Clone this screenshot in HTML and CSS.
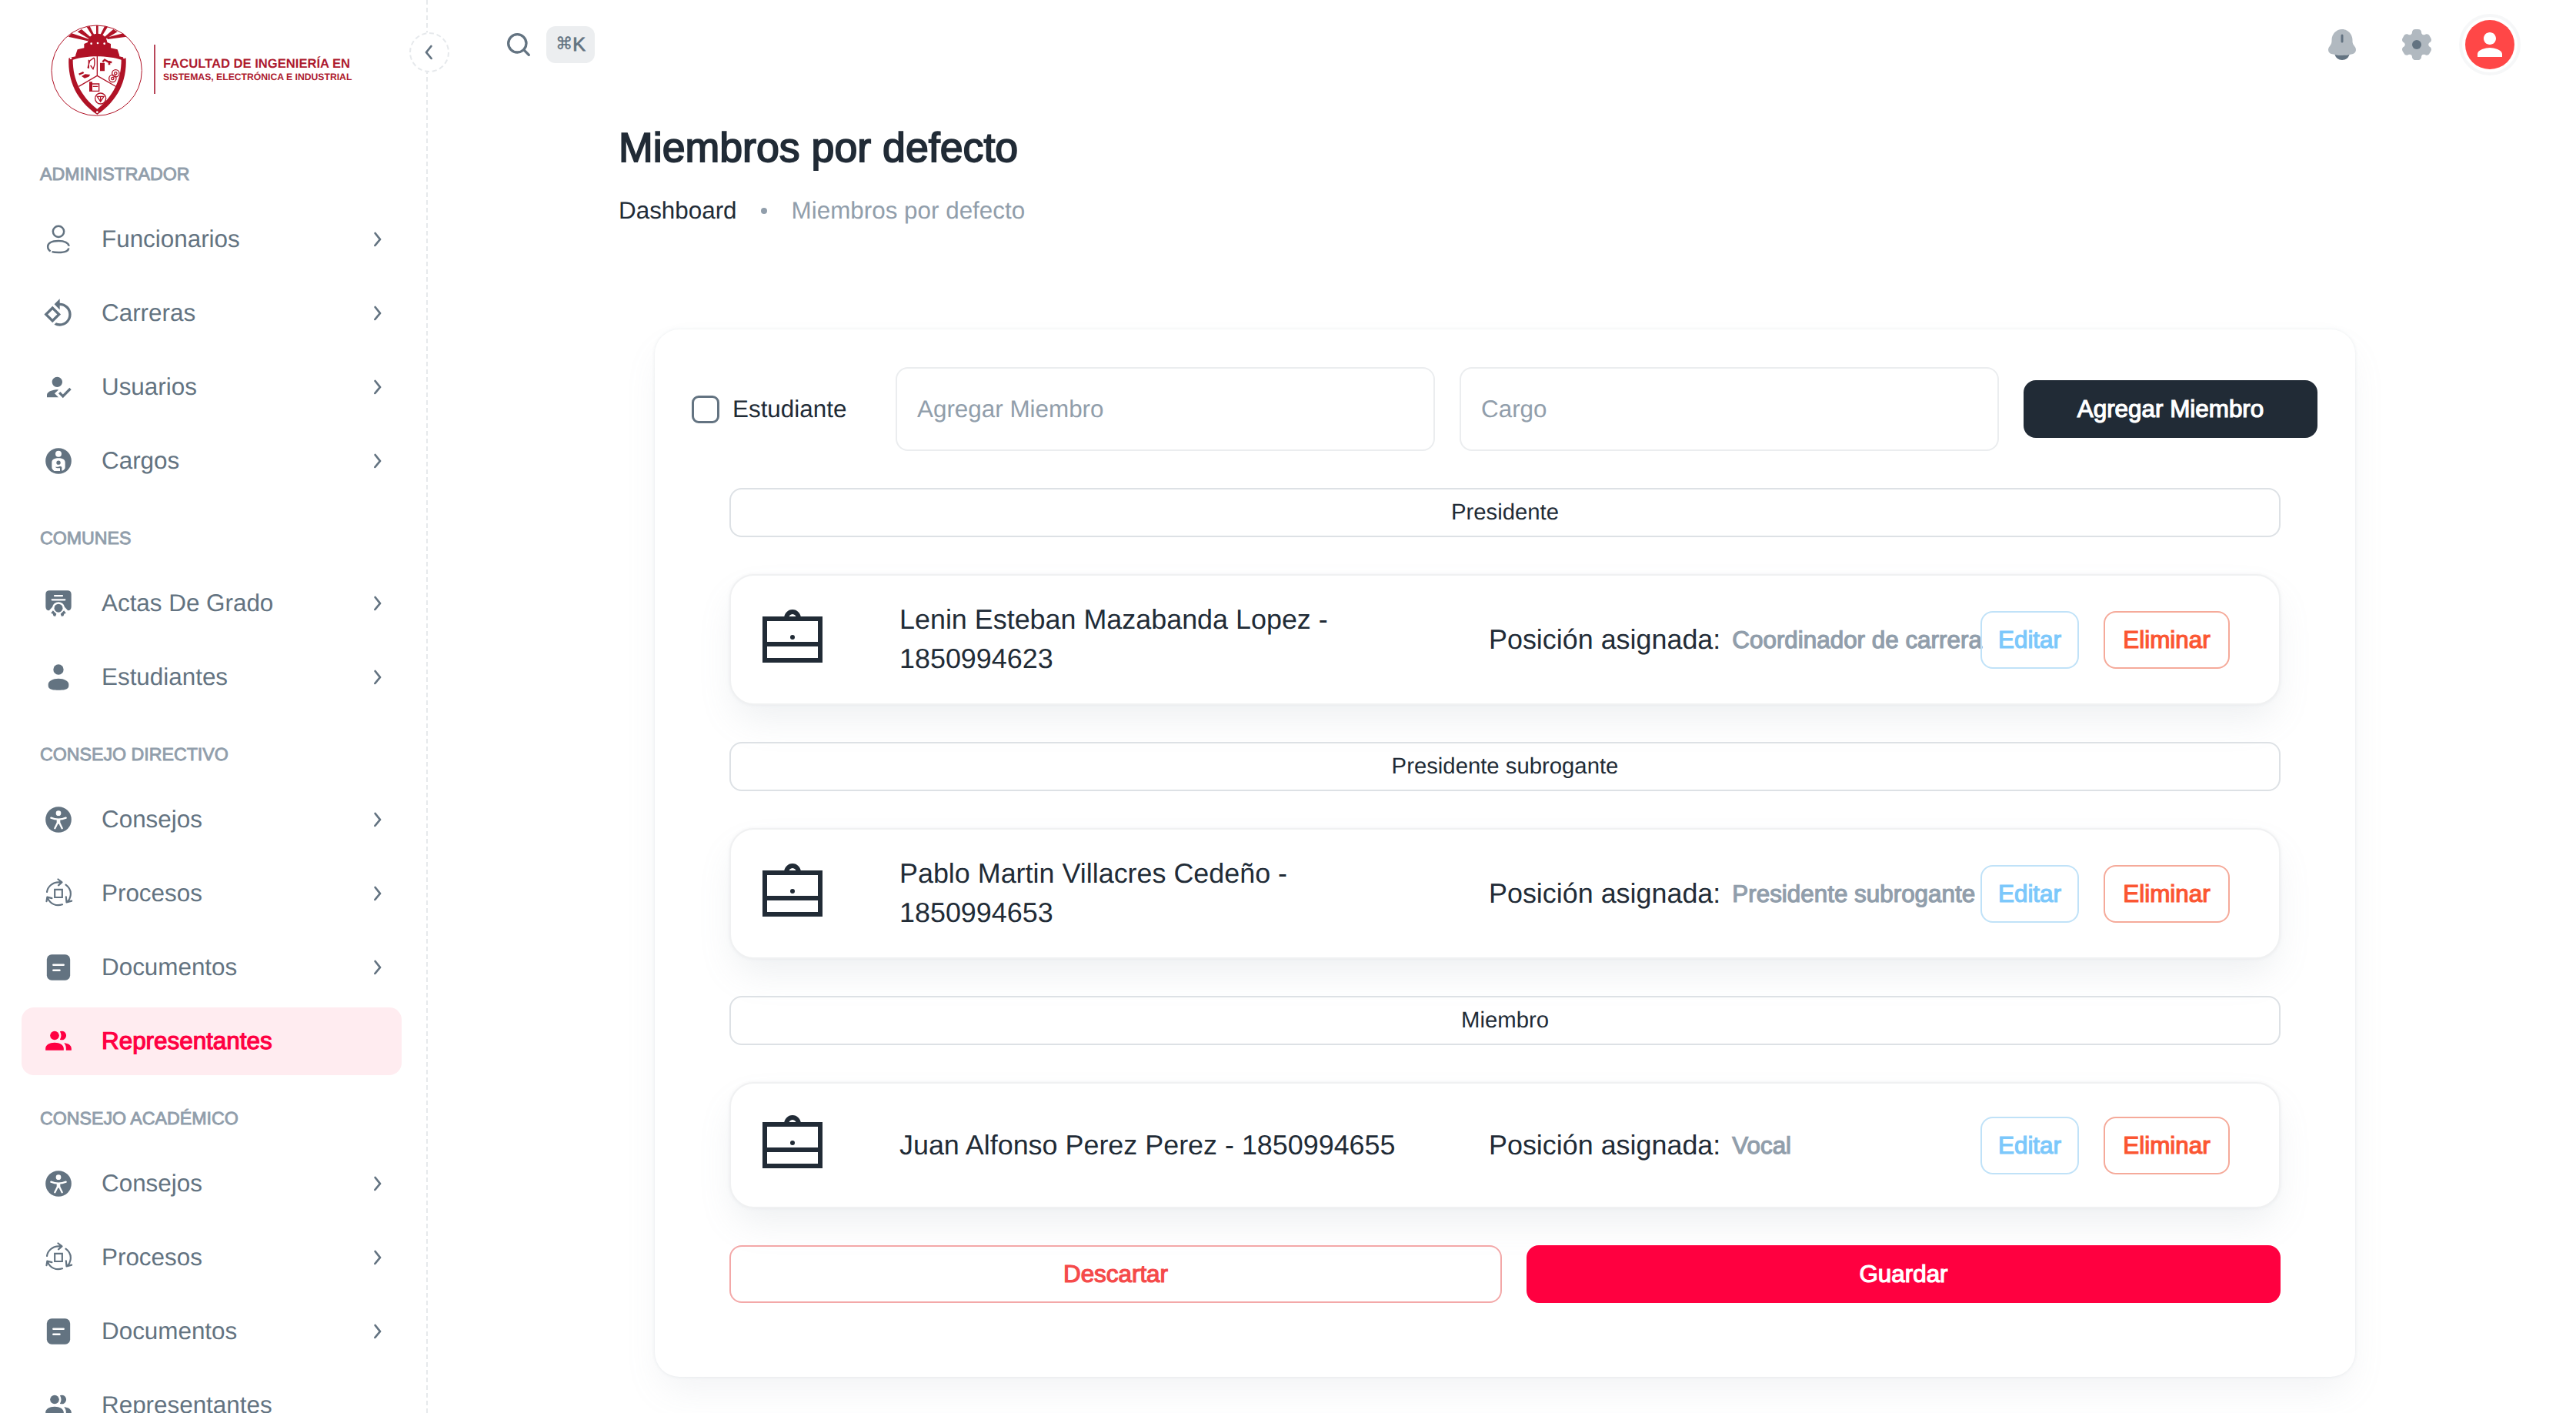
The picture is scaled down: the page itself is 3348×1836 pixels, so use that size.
FILE: index.html
```html
<!DOCTYPE html>
<html lang="es">
<head>
<meta charset="utf-8">
<title>Miembros por defecto</title>
<link rel="stylesheet" href="styles.css">
</head>
<body>
<svg class="sprite" aria-hidden="true">
  <symbol id="i-chevron" viewBox="0 0 24 24"><path d="M10 19a1 1 0 0 1-.64-.23 1 1 0 0 1-.13-1.41L13.71 12 9.39 6.63a1 1 0 0 1 .15-1.41 1 1 0 0 1 1.46.15l4.83 6a1 1 0 0 1 0 1.27l-5 6A1 1 0 0 1 10 19z"/></symbol>
  <symbol id="i-user-line" viewBox="0 0 24 24"><g fill="none" stroke="currentColor" stroke-width="1.5"><circle cx="12" cy="5.9" r="4.3"/><path d="M5.8 21.2C4.300 20.400 3.700 19.100 3.700 17.500c0-2.500 2.800-4.300 8.300-4.300 4.600 0 7.600 1.600 8.300 4M20 18.900c-.2 1-.7 1.800-1.800 2.300-1.500.7-3.700 1-6.200 1-2 0-3.700-.1-5.100-.5"/></g></symbol>
  <symbol id="i-rotate" viewBox="0 0 24 24"><path d="M7.34 6.41L.86 12.9l6.49 6.48 6.49-6.48-6.5-6.49zM3.69 12.9l3.66-3.66L11 12.9l-3.66 3.66-3.65-3.66zm15.67-6.26C17.61 4.88 15.3 4 13 4V.76L8.76 5 13 9.24V6c1.79 0 3.58.68 4.95 2.05 2.73 2.73 2.73 7.17 0 9.9C16.58 19.32 14.79 20 13 20c-.97 0-1.94-.21-2.84-.61l-1.49 1.49C10.02 21.62 11.51 22 13 22c2.300 0 4.610-.88 6.360-2.640 3.520-3.510 3.520-9.210 0-12.720z"/></symbol>
  <symbol id="i-usercheck" viewBox="0 0 24 24"><path d="M9 17l3-2.940c-.39-.04-.68-.06-1-.06-2.670 0-8 1.340-8 4v2h9l-3-3zm2-5c2.210 0 4-1.790 4-4s-1.790-4-4-4-4 1.790-4 4 1.790 4 4 4zm4.470 8.500L12 17l1.400-1.410 2.070 2.080 5.130-5.170 1.400 1.410z"/></symbol>
  <symbol id="i-guardian" viewBox="0 0 24 24"><circle cx="12" cy="12" r="10.100"/><circle cx="12" cy="6.500" r="2.400" fill="#fff"/><path fill="#fff" d="M12 9.800c2.800 0 5.200 1 5.200 3.400V17c0 1.300-1 2-1.900 2.500h-.7v-2.300c0-.7-.5-1-1.100-1-1.300 0-2.300.8-4.100.3.600 1 2.300 1.300 3.800 1v2.300H8.700C7.800 19 6.800 18.300 6.800 17v-3.800c0-2.400 2.400-3.400 5.200-3.400z"/><circle cx="12" cy="13.300" r="1.600"/></symbol>
  <symbol id="i-diploma" viewBox="0 0 24 24"><path d="M5 2h14c2 0 3 1 3 3v9.500c0 1.800-.9 3-2.700 3.100l-2.500-2.700A4.900 4.900 0 0 0 12 10.900a4.900 4.900 0 0 0-4.800 4l-2.500 2.700C2.900 17.500 2 16.300 2 14.500V5c0-2 1-3 3-3z"/><path fill="none" stroke="#fff" stroke-width="1.300" stroke-linecap="round" d="M9 6.100h6M7 9.200h10"/><circle cx="12" cy="15.700" r="3.300"/><path d="M7.700 17.500l2.700 2.800-.8 1.900-1.500-.5-.6-1.600-1.400-.4zM16.300 17.500l-2.700 2.800.8 1.900 1.500-.5.6-1.600 1.400-.4z"/></symbol>
  <symbol id="i-user" viewBox="0 0 24 24"><circle cx="12" cy="6" r="4"/><path d="M20 17.500c0 2.485 0 4.500-8 4.500s-8-2.015-8-4.500S7.582 13 12 13s8 2.015 8 4.500"/></symbol>
  <symbol id="i-access" viewBox="0 0 24 24"><circle cx="12" cy="12" r="10.100"/><circle cx="12" cy="7" r="2" fill="#fff"/><path fill="none" stroke="#fff" stroke-width="1.400" stroke-linecap="round" stroke-linejoin="round" d="M6.200 10.600C8 11.400 10 11.800 12 11.800s4-.4 5.800-1.200M11.400 12v2.300L9.200 18.700M12.600 12v2.300l2.200 4.400"/><path fill="#fff" d="M10.700 11.500h2.600v2.800L12 15.600l-1.300-1.300z"/></symbol>
  <symbol id="i-process" viewBox="0 0 24 24"><g fill="none" stroke="currentColor" stroke-width="1.300" stroke-linecap="round" stroke-linejoin="round"><path stroke-linejoin="miter" d="M9.100 8.900h5.800v6.100H9.100z"/><path d="M3 10.800C3.600 6.500 7.500 3.200 12 3.200h2.600M11.700.9l3 2.300-2.700 2.400M17.700 5.200c2.700 2 4.300 5.400 3.600 8.800-.3 1.700-1 3.200-2.300 4.500M17.900 14.600l.4 4.200 4-1M15 20.600c-3.400 1-7 .3-9.400-2-.9-.9-1.600-1.900-2.100-3M2.700 18.100l.5-3.300 3.600.9"/></g></symbol>
  <symbol id="i-doc" viewBox="0 0 24 24"><rect x="2.900" y="2" width="18.200" height="20" rx="3.800"/><path stroke="#fff" stroke-width="1.500" stroke-linecap="round" d="M8 10h8M8 14.200h4.900"/></symbol>
  <symbol id="i-group" viewBox="0 0 24 24"><circle cx="9" cy="7.500" r="3.500"/><path d="M13.100 4.300a3.500 3.500 0 1 1 0 6.400c1.300-1.900 1.300-4.500 0-6.400zM1.900 19v-1.300C1.900 14.700 5 13 9 13s7.100 1.700 7.100 4.700V19zM16.300 13.300c3.300.2 5.800 1.700 5.800 4.400V19h-4.200v-1.300c0-1.900-.5-3.300-1.600-4.400z"/></symbol>
  <symbol id="i-case" viewBox="0 0 96 96"><g fill="none" stroke="currentColor" stroke-width="6"><path d="M12 21h72v54H12zM12 54h72"/><path d="M40 20.500a8 8.500 0 0 1 16 0"/></g><circle cx="48" cy="45" r="3"/></symbol>
</svg>

<aside class="sidebar">
  <div class="logo">
    <svg class="crest" viewBox="0 0 390 390">
      <g fill="#b01226">
        <circle cx="191" cy="194" r="176" fill="none" stroke="#b01226" stroke-width="3"/>
        <path d="M189 18h8v36h-8zM152 24l12-3 17 34-7 4zM222 21l12 3-22 35-7-4zM116 43l16-10 37 32-6 6zM256 33l16 10-47 28-6-6zM80 62l14-13 66 22-4 8zM294 49l14 13-74 10-4-7z"/>
        <path d="M108 136l8-24 26-6v-16l14-6c2-22 18-34 38-34s36 12 38 34l14 6v16l26 6 8 24-4 6c-40-14-124-14-164 0z"/>
        <path fill-rule="evenodd" d="M82 146c6-4 18-4 28-8 50-12 120-12 168 0 10 4 20 4 27 8 4 90-32 164-112 220C113 310 78 236 82 146zm16 6c0 78 32 142 95 192 63-50 94-114 94-192-50-18-139-18-189 0z"/>
      </g>
      <g fill="#fff"><circle cx="170" cy="89" r="4"/><circle cx="195" cy="87" r="4"/><circle cx="221" cy="89" r="4"/><circle cx="90" cy="146" r="4"/><circle cx="298" cy="144" r="4"/><circle cx="193" cy="356" r="4"/></g>
      <g fill="none" stroke="#b01226" stroke-width="4">
        <path d="M193 138v76l-72 42M193 214l76 44"/>
        <path d="M181 144l-17 12-8 28M181 144c4 18 2 32-4 44l-10-14M160 152v34"/>
        <circle cx="265" cy="205" r="14"/><circle cx="265" cy="205" r="5"/><circle cx="253" cy="225" r="14"/><circle cx="253" cy="225" r="5"/>
        <circle cx="206" cy="303" r="21"/><path d="M193 295h26l-13 20zM206 295v22"/>
        <path d="M174 246h26v28h-30"/><path d="M176 256h20"/>
        <path stroke-width="7" d="M214 160l8-8 14 8 14 2"/>
      </g>
      <g fill="#b01226"><path d="M204 164h18v32h-18zM236 156h8v16h-8zM162 238h12v38h-12zM120 206l18-8 4 6-18 8zM132 216l14-8 20 2-6 8-16 6z"/></g>
    </svg>
    <div class="logo-text">
      <span class="logo-a">FACULTAD DE INGENIERÍA EN</span>
      <span class="logo-b">SISTEMAS, ELECTRÓNICA E INDUSTRIAL</span>
    </div>
  </div>
  <nav class="nav">
    <h6 class="nav-title">ADMINISTRADOR</h6>
    <a class="nav-item"><svg class="ico"><use href="#i-user-line"/></svg><span>Funcionarios</span><svg class="chev"><use href="#i-chevron"/></svg></a>
    <a class="nav-item"><svg class="ico"><use href="#i-rotate"/></svg><span>Carreras</span><svg class="chev"><use href="#i-chevron"/></svg></a>
    <a class="nav-item"><svg class="ico"><use href="#i-usercheck"/></svg><span>Usuarios</span><svg class="chev"><use href="#i-chevron"/></svg></a>
    <a class="nav-item"><svg class="ico"><use href="#i-guardian"/></svg><span>Cargos</span><svg class="chev"><use href="#i-chevron"/></svg></a>
    <h6 class="nav-title">COMUNES</h6>
    <a class="nav-item"><svg class="ico"><use href="#i-diploma"/></svg><span>Actas De Grado</span><svg class="chev"><use href="#i-chevron"/></svg></a>
    <a class="nav-item"><svg class="ico"><use href="#i-user"/></svg><span>Estudiantes</span><svg class="chev"><use href="#i-chevron"/></svg></a>
    <h6 class="nav-title">CONSEJO DIRECTIVO</h6>
    <a class="nav-item"><svg class="ico"><use href="#i-access"/></svg><span>Consejos</span><svg class="chev"><use href="#i-chevron"/></svg></a>
    <a class="nav-item"><svg class="ico"><use href="#i-process"/></svg><span>Procesos</span><svg class="chev"><use href="#i-chevron"/></svg></a>
    <a class="nav-item"><svg class="ico"><use href="#i-doc"/></svg><span>Documentos</span><svg class="chev"><use href="#i-chevron"/></svg></a>
    <a class="nav-item active"><svg class="ico"><use href="#i-group"/></svg><span>Representantes</span></a>
    <h6 class="nav-title">CONSEJO ACADÉMICO</h6>
    <a class="nav-item"><svg class="ico"><use href="#i-access"/></svg><span>Consejos</span><svg class="chev"><use href="#i-chevron"/></svg></a>
    <a class="nav-item"><svg class="ico"><use href="#i-process"/></svg><span>Procesos</span><svg class="chev"><use href="#i-chevron"/></svg></a>
    <a class="nav-item"><svg class="ico"><use href="#i-doc"/></svg><span>Documentos</span><svg class="chev"><use href="#i-chevron"/></svg></a>
    <a class="nav-item"><svg class="ico"><use href="#i-group"/></svg><span>Representantes</span></a>
  </nav>
</aside>
<button class="toggle" aria-label="Contraer"><svg class="chev flip"><use href="#i-chevron"/></svg></button>

<div class="page">
  <header class="topbar">
    <svg class="search" viewBox="0 0 24 24"><path d="M20.710 19.290l-3.400-3.390A7.920 7.920 0 0 0 19 11a8 8 0 1 0-8 8 7.920 7.920 0 0 0 4.900-1.690l3.390 3.400a1 1 0 0 0 1.420 0 1 1 0 0 0 0-1.420zM5 11a6 6 0 1 1 6 6 6 6 0 0 1-6-6z"/></svg>
    <span class="kbd"><span class="cmd">⌘</span>K</span>
    <div class="actions">
      <svg class="tool" viewBox="0 0 24 24"><path opacity=".5" d="M18.749 9v.704c0 .845.24 1.671.692 2.374l1.108 1.723c1.011 1.574.239 3.713-1.520 4.210a25.794 25.794 0 0 1-14.060 0c-1.759-.497-2.531-2.636-1.520-4.210l1.108-1.723a4.393 4.393 0 0 0 .693-2.374V9c0-3.866 3.022-7 6.749-7s6.750 3.134 6.750 7"/><path d="M12.750 6a.75.75 0 0 0-1.500 0v4a.75.75 0 0 0 1.500 0zM7.243 18.545a5.002 5.002 0 0 0 9.513 0c-3.145.59-6.367.59-9.513 0"/></svg>
      <svg class="tool" viewBox="0 0 24 24"><path opacity=".5" d="M14.279 2.152C13.909 2 13.439 2 12.500 2s-1.408 0-1.779.152a2.008 2.008 0 0 0-1.090 1.083c-.094.223-.13.484-.145.863a1.615 1.615 0 0 1-.796 1.353 1.640 1.640 0 0 1-1.579.008c-.338-.178-.583-.276-.825-.308a2.026 2.026 0 0 0-1.490.396c-.318.242-.553.646-1.022 1.453-.47.807-.704 1.210-.757 1.605-.07.526.074 1.058.4 1.479.148.192.357.353.68.555.477.297.783.803.783 1.361 0 .558-.306 1.064-.782 1.360-.324.203-.533.364-.682.556a1.990 1.990 0 0 0-.399 1.479c.053.394.287.798.757 1.605.47.807.704 1.210 1.022 1.453.424.323.96.465 1.490.396.242-.032.487-.13.825-.308a1.640 1.640 0 0 1 1.580.008c.486.28.774.795.795 1.353.015.38.051.64.145.863.204.49.596.88 1.090 1.083.37.152.84.152 1.779.152s1.409 0 1.779-.152a2.008 2.008 0 0 0 1.090-1.083c.094-.223.13-.483.145-.863.02-.558.309-1.074.796-1.353a1.640 1.640 0 0 1 1.579-.008c.338.178.583.276.825.308.53.07 1.066-.073 1.490-.396.318-.242.553-.646 1.022-1.453.47-.807.704-1.210.757-1.605a1.990 1.990 0 0 0-.4-1.479c-.148-.192-.357-.353-.68-.555-.477-.297-.783-.803-.783-1.361 0-.558.306-1.064.782-1.360.324-.203.533-.364.682-.556a1.990 1.990 0 0 0 .399-1.479c-.053-.394-.287-.798-.757-1.605-.47-.807-.704-1.210-1.022-1.453a2.026 2.026 0 0 0-1.490-.396c-.242.032-.487.13-.825.308a1.640 1.640 0 0 1-1.580-.008 1.615 1.615 0 0 1-.795-1.353c-.015-.38-.051-.64-.145-.863a2.007 2.007 0 0 0-1.090-1.083"/><circle cx="12.500" cy="12" r="3"/></svg>
      <span class="avatar"><span class="face"><svg viewBox="0 0 24 24"><path d="M12 12c2.210 0 4-1.790 4-4s-1.790-4-4-4-4 1.790-4 4 1.790 4 4 4zm0 2c-2.670 0-8 1.340-8 4v2h16v-2c0-2.660-5.330-4-8-4z"/></svg></span></span>
    </div>
  </header>

  <main class="content">
    <h1 class="title">Miembros por defecto</h1>
    <div class="crumbs"><span>Dashboard</span><i class="dot"></i><span class="muted">Miembros por defecto</span></div>

    <section class="card">
      <div class="form">
        <label class="check"><i class="box"></i>Estudiante</label>
        <div class="field">Agregar Miembro</div>
        <div class="field">Cargo</div>
        <button class="btn dark">Agregar Miembro</button>
      </div>
      <div class="list">
        <div class="role">Presidente</div>
        <article class="member">
          <svg class="case"><use href="#i-case"/></svg>
          <p class="name">Lenin Esteban Mazabanda Lopez - 1850994623</p>
          <p class="pos"><span>Posición asignada:</span><b>Coordinador de carrera</b></p>
          <div class="ops"><button class="btn edit">Editar</button><button class="btn del">Eliminar</button></div>
        </article>
        <div class="role">Presidente subrogante</div>
        <article class="member">
          <svg class="case"><use href="#i-case"/></svg>
          <p class="name">Pablo Martin Villacres Cedeño - 1850994653</p>
          <p class="pos"><span>Posición asignada:</span><b>Presidente subrogante</b></p>
          <div class="ops"><button class="btn edit">Editar</button><button class="btn del">Eliminar</button></div>
        </article>
        <div class="role">Miembro</div>
        <article class="member">
          <svg class="case"><use href="#i-case"/></svg>
          <p class="name">Juan Alfonso Perez Perez - 1850994655</p>
          <p class="pos"><span>Posición asignada:</span><b>Vocal</b></p>
          <div class="ops"><button class="btn edit">Editar</button><button class="btn del">Eliminar</button></div>
        </article>
        <div class="footer"><button class="btn discard">Descartar</button><button class="btn save">Guardar</button></div>
      </div>
    </section>
  </main>
</div>
</body>
</html>
```
FILE: styles.css
```css
* { box-sizing: border-box; }

body {
  margin: 0;
  height: 1836px;
  overflow: hidden;
  display: flex;
  position: relative;
  background: #fff;
  color: #212b36;
  font-family: "Liberation Sans", Arial, sans-serif;
  font-size: 31.4px;
  text-rendering: geometricPrecision;
}

h1, h6, p { margin: 0; font-weight: 400; }
svg { display: block; fill: currentColor; flex: none; }
.sprite { position: absolute; width: 0; height: 0; }
button { font: inherit; background: none; border: 0; padding: 0; margin: 0; color: inherit; }

/* Sidebar */
.sidebar {
  width: 556px;
  height: 1836px;
  flex: none;
  overflow: hidden;
  border-right: 2px dashed #e6e9ec;
}
.logo { height: 170px; padding: 27px 0 0 62px; display: flex; align-items: flex-start; }
.crest { width: 130px; height: 130px; }
.logo-text {
  margin: 31px 0 0 8px;
  height: 64px;
  padding: 15px 0 0 10px;
  border-left: 2px solid #b8475a;
  display: flex;
  flex-direction: column;
  font-weight: 700;
  color: #ad1a2e;
  white-space: nowrap;
}
.logo-a { font-size: 16.6px; line-height: 20px; }
.logo-b { font-size: 12.2px; line-height: 15px; }

.nav { padding-left: 28px; }
.nav-title {
  height: 97px;
  padding: 44px 0 0 24px;
  font-size: 23.2px;
  line-height: 24px;
  color: #919eab;
  -webkit-text-stroke: .9px currentColor;
}
.nav-item {
  width: 494px;
  height: 88px;
  margin-bottom: 8px;
  padding: 0 16px 0 28px;
  border-radius: 16px;
  display: flex;
  align-items: center;
  color: #637381;
}
.nav-item:has(+ .nav-title) { margin-bottom: 0; }
.nav-item span { flex: 1; margin-left: 36px; line-height: 44px; }
.ico { width: 40px; height: 40px; }
.chev { width: 32px; height: 32px; }
.nav-item.active { background: #ffecf0; color: #ff0042; }
.nav-item.active span { -webkit-text-stroke: 1.2px currentColor; }
.flip { transform: scaleX(-1); }
.toggle {
  position: absolute;
  left: 532px;
  top: 42px;
  width: 52px;
  height: 52px;
  border: 2px dashed #e6e9ec;
  border-radius: 50%;
  background: #fff;
  color: #637381;
  display: grid;
  place-items: center;
}

/* Top bar */
.page { flex: 1; min-width: 0; }
.topbar {
  height: 116px;
  padding: 0 72px 0 98px;
  display: flex;
  align-items: center;
  color: #637381;
}
.search { width: 40px; height: 40px; }
.kbd {
  margin-left: 16px;
  width: 63px;
  height: 48px;
  border-radius: 12px;
  background: #eceef0;
  display: flex;
  align-items: center;
  justify-content: center;
  font-size: 25px;
  line-height: 48px;
  -webkit-text-stroke: .8px currentColor;
}
.cmd { font-family: "DejaVu Sans", sans-serif; font-size: 22px; -webkit-text-stroke: .3px currentColor; }
.actions { margin-left: auto; display: flex; align-items: center; gap: 48px; }
.tool { width: 48px; height: 48px; }
.avatar {
  margin-left: -16px;
  width: 80px;
  height: 80px;
  padding: 4px;
  border: 4px solid #f6f7f8;
  border-radius: 50%;
}
.face {
  width: 64px;
  height: 64px;
  border-radius: 50%;
  background: #ff4747;
  color: #fff;
  display: grid;
  place-items: center;
}
.face svg { width: 48px; height: 48px; }

/* Content */
.content { padding: 38px 287px 0 247px; }
.title {
  padding-left: 1px;
  font-size: 53.7px;
  line-height: 76px;
  -webkit-text-stroke: 1.8px currentColor;
}
.crumbs { margin: 22px 0 132px; padding-left: 1px; display: flex; align-items: center; line-height: 44px; }
.dot { width: 8px; height: 8px; margin: 0 32px 0 31px; border-radius: 50%; background: #919eab; }
.muted { color: #919eab; }

.card {
  width: 2210px;
  height: 1361px;
  margin-left: 48px;
  padding: 49px 48px 0;
  border-radius: 32px;
  background: #fff;
  box-shadow: 0 0 4px rgba(145, 158, 171, .2), 0 24px 48px -8px rgba(145, 158, 171, .12);
}
.form { display: grid; grid-template-columns: 233px 701px 701px 382px; column-gap: 32px; align-items: center; }
.check { display: flex; align-items: center; gap: 17px; }
.box { width: 36px; height: 36px; border: 3px solid #637381; border-radius: 9px; }
.field {
  height: 109px;
  padding-left: 26px;
  border: 2px solid #ebedef;
  border-radius: 16px;
  line-height: 105px;
  color: #919eab;
}
.btn {
  height: 75px;
  border-radius: 16px;
  line-height: 71px;
  text-align: center;
  -webkit-text-stroke: 1.2px currentColor;
}
.dark { background: #212b36; color: #fff; }

.list { margin: 48px 49px 0; display: flex; flex-direction: column; gap: 48px; }
.role {
  height: 64px;
  border: 2px solid #dde1e5;
  border-radius: 16px;
  line-height: 60px;
  text-align: center;
  font-size: 29.3px;
}
.member {
  padding: 32px 64px 32px 32px;
  border: 2px solid #f0f1f2;
  border-radius: 32px;
  background: #fff;
  display: grid;
  grid-template-columns: 187px 766px 639px 324px;
  align-items: center;
  font-size: 35.9px;
  line-height: 51px;
  box-shadow: 0 0 4px rgba(145, 158, 171, .12), 0 24px 48px -8px rgba(145, 158, 171, .16);
}
.case { width: 96px; height: 96px; }
.name { max-width: 700px; }
.pos { display: flex; align-items: center; gap: 15px; white-space: nowrap; }
.pos b { font-weight: 400; font-size: 31.4px; color: #919eab; -webkit-text-stroke: 1.2px currentColor; }
.ops { display: flex; gap: 32px; font-size: 31.4px; }
.edit { width: 128px; border: 2px solid #c0e2f8; color: #7cc8fb; }
.del { width: 164px; border: 2px solid #f5aa9a; color: #fb5632; }
.footer { display: grid; grid-template-columns: 1004px 980px; column-gap: 32px; }
.discard { border: 2px solid #f3a8a8; color: #f54a4a; }
.save { background: #ff0040; color: #fff; }
```
